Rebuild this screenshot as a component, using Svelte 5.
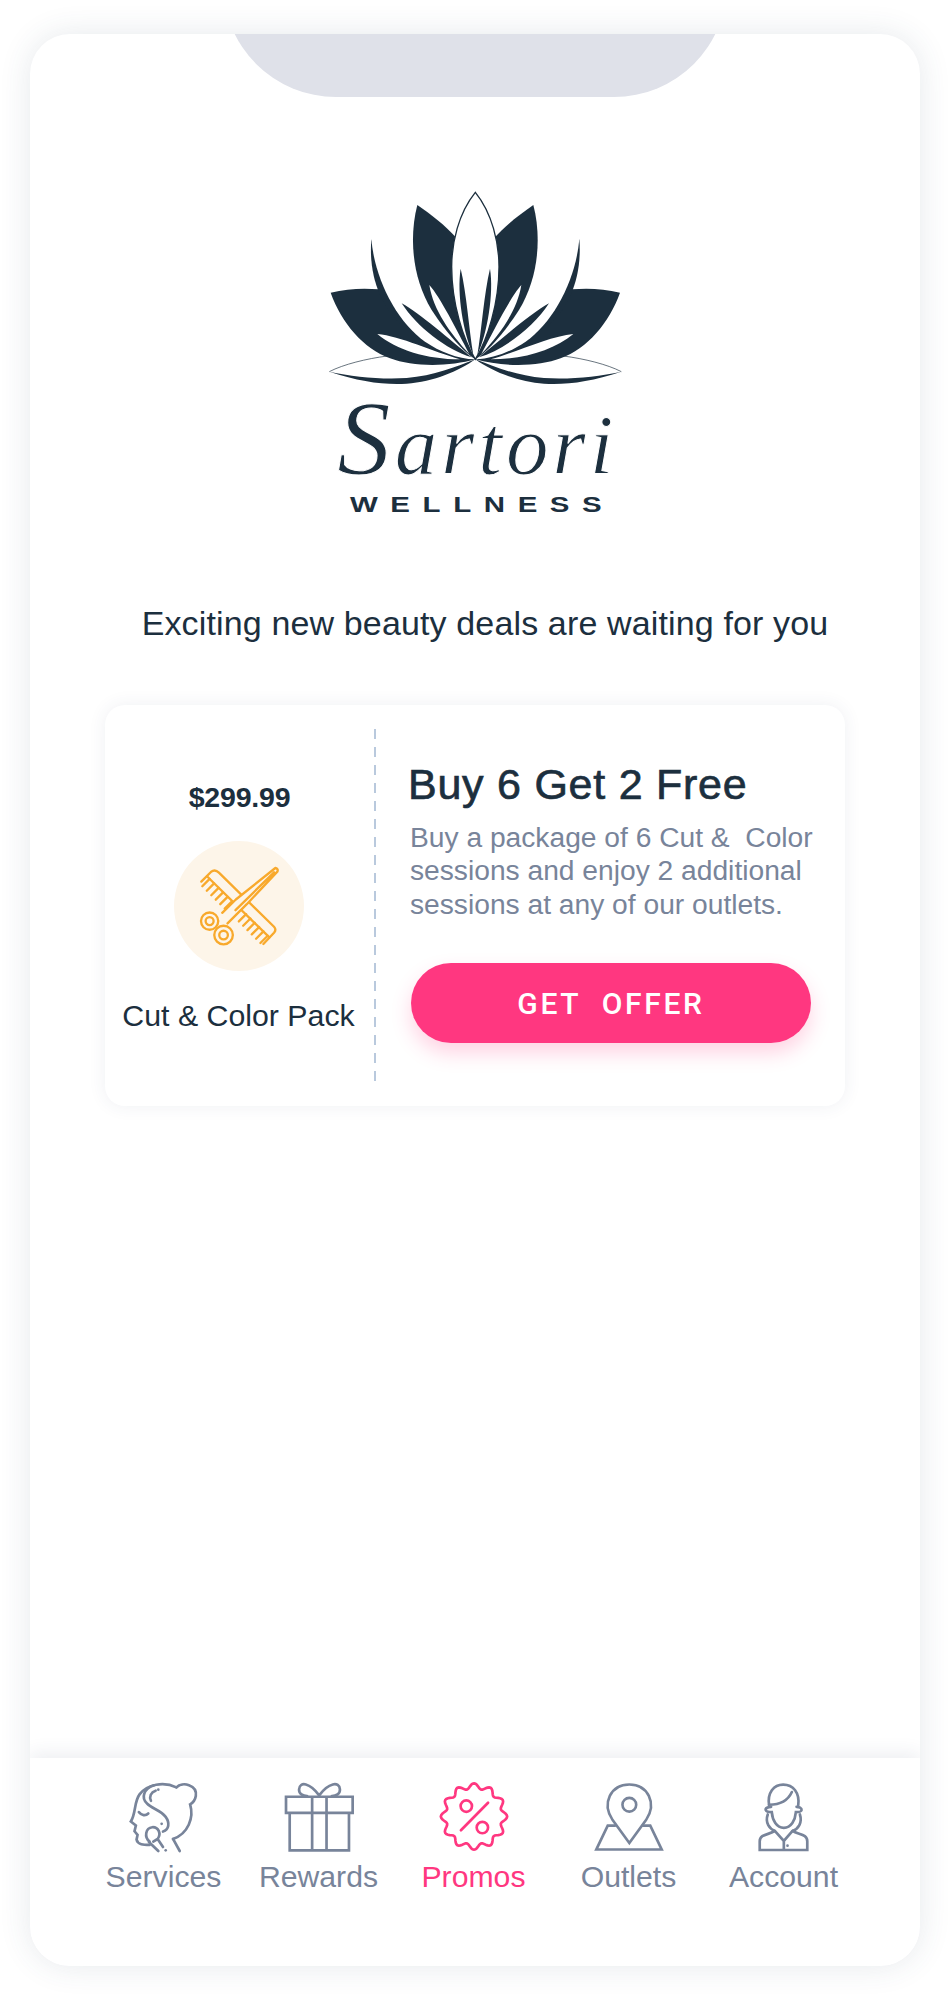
<script>
  const wavePts = [];
  for (let i = 0; i < 144; i++) {
    const a = (i / 144) * Math.PI * 2;
    const r = 91 + 8 * Math.cos(12 * a);
    wavePts.push(`${(191 + r * Math.sin(a)).toFixed(1)} ${(171 - r * Math.cos(a)).toFixed(1)}`);
  }
  const wave = 'M' + wavePts.join('L') + 'Z';

  const teeth = [];
  for (let i = 0; i < 6; i++) teeth.push([358 + i * 13.5, 566 + i * 13.5]);
  for (let i = 0; i < 6; i++) teeth.push([468 + i * 13, 672 + i * 13]);
</script>

<div class="phone">
  <div class="notch"></div>

  <main class="content">
    <svg class="logo" viewBox="0 0 1050 1080" aria-label="Sartori Wellness">
      <defs>
        <g id="half">
          <path class="ink" d="M88 605C180 635 250 645 320 641C400 636 480 602 526 568C470 590 400 618 320 624C240 629 160 620 88 605Z"/>
          <path class="line" d="M88 605C130 583 200 566 262 558"/>
          <path class="ink" d="M92 368C140 356 190 354 236 358L526 568C450 590 340 592 270 565C190 535 125 460 92 368Z"/>
          <path class="paper" d="M232 492C300 498 400 545 480 568C380 568 290 540 232 492Z"/>
          <path class="ink" d="M214 208C205 320 245 410 300 460L320 420Z"/>
          <path class="paper" d="M214 208C225 330 290 455 375 515C420 545 470 566 526 568C400 300 280 210 214 208Z"/>
          <path class="ink" d="M305 400C360 430 450 510 515 562C440 540 350 470 305 400Z"/>
          <path class="ink" d="M352 105C395 135 435 165 470 205L526 568C490 545 440 490 395 420C340 330 325 210 352 105Z"/>
          <path class="paper" d="M388 345C420 380 470 480 508 552C450 490 400 420 388 345Z"/>
        </g>
        <g id="slit">
          <path class="ink" d="M482 296C470 370 490 490 520 555C507 480 500 370 482 296Z"/>
        </g>
      </defs>
      <use href="#half"/>
      <use href="#half" transform="translate(1052 0) scale(-1 1)"/>
      <path class="petal" d="M526 67C475 130 455 220 455 290C455 400 490 510 526 568C562 510 597 400 597 290C597 220 577 130 526 67Z"/>
      <use href="#slit"/>
      <use href="#slit" transform="translate(1052 0) scale(-1 1)"/>
      <text class="script" x="112" y="911" textLength="828"><tspan class="cap">S</tspan>artori</text>
      <g transform="translate(150 1025) scale(1.3 1)">
        <text class="well" textLength="581">WELLNESS</text>
      </g>
    </svg>

    <p class="intro">Exciting new beauty deals are waiting for you</p>

    <section class="card">
      <div class="pack">
        <div class="price">$299.99</div>
        <div class="disc">
          <svg class="tools" viewBox="320 525 250 245">
            <path d="M333 574L362 545Q374 535 386 547L552 710Q560 719 552 728L520 762"/>
            <path d="M350 558L538 742"/>
            {#each teeth as [x, y]}
              <path d="M{x} {y}l-22 22"/>
            {/each}
            <path class="mask" d="M556 533L562 542L462 650L410 700L395 670L437 628Z"/>
            <path d="M556 533Q566 536 562 544L470 642L412 700M556 533L437 628L396 668M552 546L436 660"/>
            <circle cx="358" cy="693" r="26"/>
            <circle cx="358" cy="693" r="12"/>
            <circle cx="400" cy="735" r="28"/>
            <circle cx="400" cy="735" r="13"/>
          </svg>
        </div>
        <div class="pack-name">Cut &amp; Color Pack</div>
      </div>
      <div class="rule"></div>
      <div class="offer">
        <h2>Buy 6 Get 2 Free</h2>
        <p>Buy a package of 6 Cut &amp;&nbsp; Color sessions and enjoy 2 additional sessions at any of our outlets.</p>
        <button>GET&nbsp; OFFER</button>
      </div>
    </section>
  </main>

  <nav class="tabs">
    <div class="tab">
      <svg viewBox="120 65 210 215">
        <path d="M262 84C280 66 325 76 320 110C318 122 312 130 303 135C315 175 297 222 252 238"/>
        <path d="M262 84C225 66 175 74 152 105C135 128 142 160 126 186L141 198L137 215L146 226L143 240C146 256 165 256 182 256"/>
        <path d="M195 78C165 88 155 115 175 133C190 148 215 152 230 172C243 190 240 210 222 216"/>
        <path d="M200 94C186 98 180 112 186 124"/>
        <path d="M150 158C158 168 170 170 178 162"/>
        <path d="M182 246C165 232 170 205 190 203C208 202 218 222 206 238L193 246M180 247L208 274M206 238L222 262M252 238L272 274"/>
        <circle class="dot" cx="208" cy="91" r="4"/>
        <circle class="dot" cx="218" cy="193" r="4"/>
        <circle class="dot" cx="230" cy="272" r="4"/>
      </svg>
      <span>Services</span>
    </div>
    <div class="tab">
      <svg viewBox="580 65 215 215">
        <path d="M589 112H788V160H589ZM600 160V272H777V160M667 112V272M710 112V272"/>
        <path d="M688 108C660 70 630 65 628 90C627 103 640 110 652 110M688 108C716 70 748 65 750 90C751 103 738 110 726 110"/>
      </svg>
      <span>Rewards</span>
    </div>
    <div class="tab active">
      <svg viewBox="85 65 212 215">
        <path d={wave}/>
        <circle cx="168" cy="140" r="17"/>
        <circle cx="216" cy="204" r="17"/>
        <path d="M152 212L233 130"/>
      </svg>
      <span>Promos</span>
    </div>
    <div class="tab">
      <svg viewBox="545 65 220 215">
        <path d="M656 252L605 182C570 130 600 73 656 73C712 73 742 130 707 182Z"/>
        <circle cx="656" cy="135" r="21"/>
        <path d="M612 199H590L555 272H755L720 199H697"/>
      </svg>
      <span>Outlets</span>
    </div>
    <div class="tab">
      <svg viewBox="1015 65 215 215">
        <path d="M1078 138C1072 100 1092 76 1120 76C1150 76 1170 100 1165 138"/>
        <path d="M1078 136C1110 136 1135 122 1146 98"/>
        <path d="M1084 142C1075 142 1066 146 1068 152C1070 158 1078 158 1086 158C1088 182 1100 205 1122 205C1144 205 1156 182 1158 158C1166 158 1174 158 1175 152C1176 146 1167 142 1160 142"/>
        <path d="M1074 165C1065 190 1080 208 1095 214M1170 165C1178 190 1165 208 1148 214"/>
        <path d="M1095 214C1080 226 1050 222 1050 245V271H1192V245C1192 222 1164 226 1148 214M1095 214L1122 244L1148 214M1122 244V271"/>
        <circle class="dot" cx="1133" cy="258" r="4"/>
      </svg>
      <span>Account</span>
    </div>
  </nav>
</div>

<style>
  :global(body) {
    margin: 0;
    background: #fff;
    font-family: "Liberation Sans", Arial, sans-serif;
  }
  .phone {
    box-sizing: border-box;
    width: 890px;
    height: 1932px;
    margin: 34px 30px;
    background: #fff;
    border-radius: 40px;
    box-shadow: 0 0 32px rgba(50, 70, 100, 0.12);
    display: flex;
    flex-direction: column;
    overflow: hidden;
  }
  .notch {
    flex: none;
    width: 504px;
    height: 113px;
    margin: -50px auto 0;
    background: #dfe1e9;
    border-radius: 0 0 113px 113px;
  }
  .content {
    flex: 1;
    display: flex;
    flex-direction: column;
    align-items: center;
  }
  .logo {
    display: block;
    width: 350px;
    height: 360px;
    margin-top: 73px;
  }
  .ink { fill: #1c2f3e; }
  .paper { fill: #fff; }
  .line { fill: none; stroke: #1c2f3e; stroke-width: 2; }
  .petal { fill: #fff; stroke: #1c2f3e; stroke-width: 4; }
  .script {
    font-family: "Liberation Serif", serif;
    font-style: italic;
    font-size: 255px;
    fill: #1c2f3e;
    stroke: #fff;
    stroke-width: 3;
  }
  .cap { font-size: 320px; }
  .well {
    font-family: "Liberation Sans", sans-serif;
    font-weight: 700;
    font-size: 68px;
    fill: #1c2f3e;
  }
  .intro {
    margin: 73px 0 0 20px;
    font-size: 34px;
    line-height: 40px;
    letter-spacing: 0.14px;
    color: #1c2f3e;
  }
  .card {
    width: 740px;
    height: 401px;
    margin-top: 62px;
    background: #fff;
    border-radius: 20px;
    box-shadow: 0 0 18px rgba(50, 70, 100, 0.08);
    display: flex;
  }
  .pack {
    flex: none;
    width: 269px;
    display: flex;
    flex-direction: column;
    align-items: center;
    color: #1c2f3e;
  }
  .price {
    margin-top: 76px;
    font-size: 28.5px;
    line-height: 32px;
    font-weight: 700;
    letter-spacing: -0.2px;
  }
  .disc {
    width: 130px;
    height: 130px;
    margin: 28px 2px 0 0;
    border-radius: 50%;
    background: #fdf5e9;
    display: flex;
    align-items: center;
    justify-content: center;
  }
  .tools {
    width: 83px;
    height: 82px;
    fill: none;
    stroke: #f8a92c;
    stroke-width: 7;
    stroke-linecap: round;
    stroke-linejoin: round;
  }
  .mask { fill: #fdf5e9; stroke: none; }
  .pack-name {
    margin: 27px 2px 0 0;
    font-size: 30.3px;
    line-height: 36px;
    white-space: nowrap;
  }
  .rule {
    flex: none;
    width: 2px;
    height: 352px;
    margin-top: 24px;
    background: repeating-linear-gradient(to bottom, #b9c9dd 0 10px, transparent 10px 18px);
  }
  .offer {
    flex: 1;
    padding: 0 0 0 32px;
    min-width: 0;
  }
  h2 {
    margin: 55px 0 0;
    font-size: 43px;
    line-height: 48px;
    font-weight: 400;
    letter-spacing: 0.75px;
    -webkit-text-stroke: 0.7px #1c2f3e;
    color: #1c2f3e;
  }
  .offer p {
    margin: 13px 0 0 2px;
    width: 425px;
    font-size: 28.2px;
    line-height: 33.4px;
    color: #78849a;
  }
  button {
    display: block;
    width: 400px;
    height: 80px;
    margin: 42px 0 0 3px;
    padding: 0;
    border: 0;
    border-radius: 40px;
    background: #ff3780;
    box-shadow: 0 10px 20px rgba(255, 55, 128, 0.22);
    color: #fff;
    font-family: Roboto, sans-serif;
    font-weight: 500;
    font-size: 30px;
    letter-spacing: 2.7px;
  }
  .tabs {
    flex: none;
    height: 208px;
    box-sizing: border-box;
    padding: 23px 59px 0 56px;
    background: #fff;
    box-shadow: 0 -6px 16px rgba(50, 70, 100, 0.08);
    display: grid;
    grid-template-columns: repeat(5, 1fr);
    position: relative;
    align-items: start;
  }
  .tab {
    display: flex;
    flex-direction: column;
    align-items: center;
    color: #78849a;
    font-size: 30.2px;
    line-height: 36px;
  }
  .tab svg {
    display: block;
    width: 72px;
    height: 72px;
    fill: none;
    stroke: currentColor;
    stroke-width: 8;
    stroke-linecap: round;
    stroke-linejoin: miter;
    margin-bottom: 6px;
  }
  .tab .dot { fill: currentColor; stroke: none; }
  .active { color: #ff3780; }
</style>
